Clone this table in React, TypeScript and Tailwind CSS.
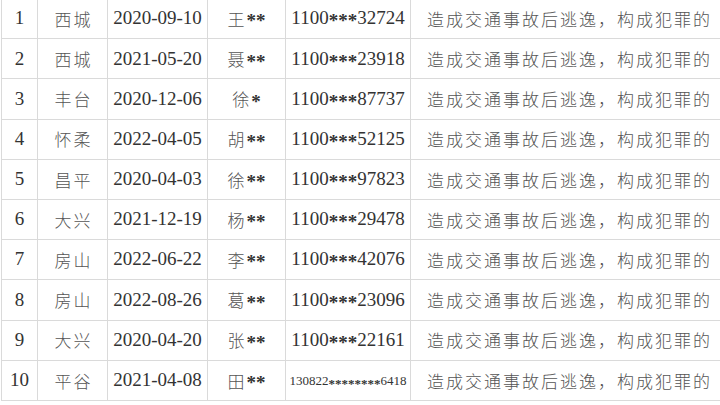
import React from "react";

const rows = [
  { no: "1", area: "西城", date: "2020-09-10", name: "王**", id: "1100***32724" },
  { no: "2", area: "西城", date: "2021-05-20", name: "聂**", id: "1100***23918" },
  { no: "3", area: "丰台", date: "2020-12-06", name: "徐*", id: "1100***87737" },
  { no: "4", area: "怀柔", date: "2022-04-05", name: "胡**", id: "1100***52125" },
  { no: "5", area: "昌平", date: "2020-04-03", name: "徐**", id: "1100***97823" },
  { no: "6", area: "大兴", date: "2021-12-19", name: "杨**", id: "1100***29478" },
  { no: "7", area: "房山", date: "2022-06-22", name: "李**", id: "1100***42076" },
  { no: "8", area: "房山", date: "2022-08-26", name: "葛**", id: "1100***23096" },
  { no: "9", area: "大兴", date: "2020-04-20", name: "张**", id: "1100***22161" },
  { no: "10", area: "平谷", date: "2021-04-08", name: "田**", id: "130822********6418", small: true },
];

const serif = "font-['Liberation_Serif','Noto_Sans_CJK_SC',serif]";
const cjk = "font-['Noto_Sans_CJK_SC',sans-serif]";

// splits an id like 1100***32724 so the stars can sit mid-line, as in the source table
function Masked({ text }: { text: string }) {
  const parts = text.match(/\*+|[^*]+/g) || [];
  return (
    <>
      {parts.map((p, i) =>
        p[0] === "*" ? (
          <span key={i} className="inline-block translate-y-[3px] font-bold">
            {p}
          </span>
        ) : (
          <span key={i}>{p}</span>
        )
      )}
    </>
  );
}

export default function App() {
  return (
    <div className="w-[720px] h-[405px] overflow-hidden bg-white">
      <div className="-mt-[1px] ml-[1px] border-l border-[#dadada]">
        {rows.map((r) => (
          <div
            key={r.no}
            className="grid grid-cols-[36px_70px_100px_78px_125px_307px] h-[40.2px] border-b border-[#dadada]"
          >
            <div className={`flex items-center justify-center border-r border-[#dadada] text-[19px] text-[#333] ${serif}`}>
              {r.no}
            </div>
            <div className={`flex items-center justify-center border-r border-[#dadada] text-[17px] font-light tracking-[2px] pl-[2px] text-[#555] ${cjk}`}>
              {r.area}
            </div>
            <div className={`flex items-center justify-center border-r border-[#dadada] text-[19px] text-[#333] ${serif}`}>
              {r.date}
            </div>
            <div className="flex items-center justify-center gap-[2px] border-r border-[#dadada] text-[#333]">
              <span className={`text-[17px] font-light text-[#555] ${cjk}`}>{r.name.replace(/\*/g, "")}</span>
              <span className={`text-[19px] ${serif}`}>
                <Masked text={r.name.replace(/[^*]/g, "")} />
              </span>
            </div>
            <div
              className={`flex items-center justify-center border-r border-[#dadada] text-[#333] ${serif} ${
                r.small ? "text-[13px]" : "text-[19px]"
              }`}
            >
              <Masked text={r.id} />
            </div>
            <div className={`flex items-center pl-[16px] text-[17px] font-light tracking-[2px] text-[#555] ${cjk}`}>
              造成交通事故后逃逸，构成犯罪的
            </div>
          </div>
        ))}
      </div>
    </div>
  );
}
